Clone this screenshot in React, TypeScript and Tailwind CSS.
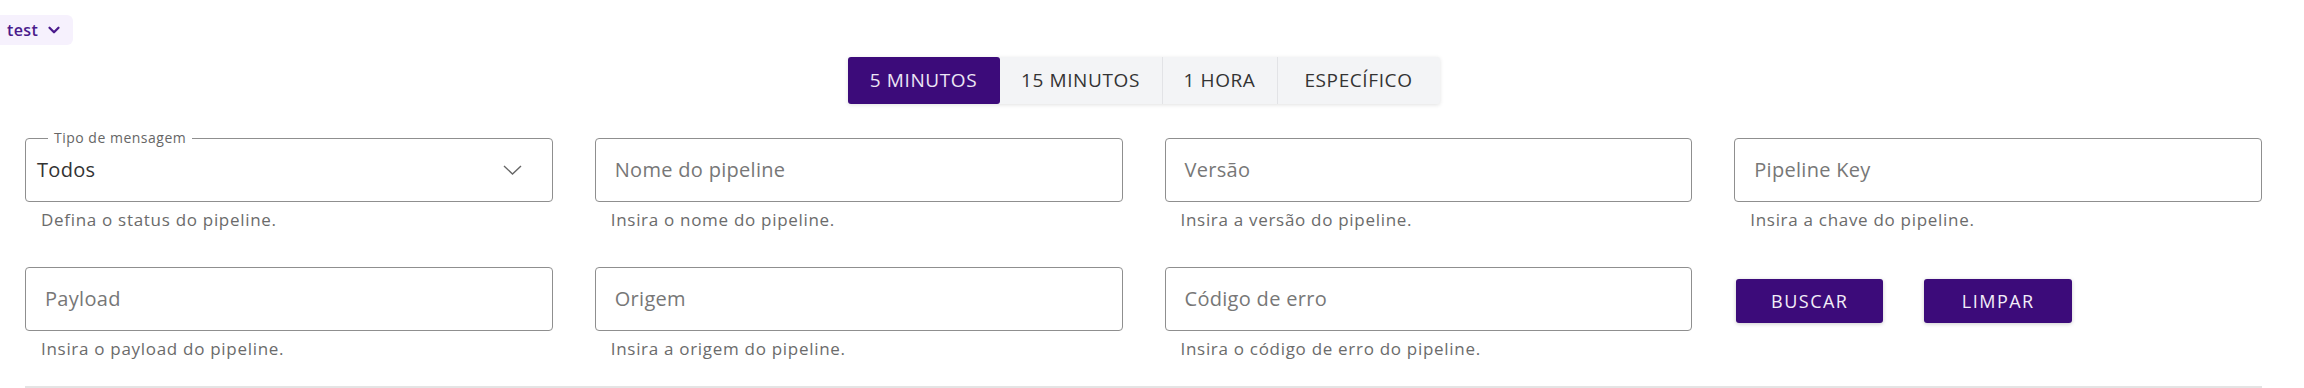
import { ChevronDown } from 'lucide-react';

const periods = [
  { label: '5 MINUTOS', w: 'w-[152px]', active: true },
  { label: '15 MINUTOS', w: 'w-[162px]', active: false },
  { label: '1 HORA', w: 'w-[115px]', active: false },
  { label: 'ESPECÍFICO', w: 'w-[163px]', active: false },
];

const TextField = ({ placeholder, help }: { placeholder: string; help: string }) => (
  <div>
    <div className="h-[64px] border border-[#8f8f8f] rounded-[4px] flex items-center px-[19px]">
      <span className="text-[20px] tracking-[0.3px] text-[#777]">{placeholder}</span>
    </div>
    <p className="mt-[8px] pl-[16px] h-[20px] leading-[20px] text-[17px] tracking-[0.7px] text-[#6b6b6b]">{help}</p>
  </div>
);

const App = () => {
  return (
    <div className="w-[2304px] h-[388px] bg-white font-['Open_Sans',sans-serif] overflow-hidden">
      <div className="pt-[15px]">
        <button className="h-[30px] w-[73px] bg-[#f6f1fd] rounded-r-md flex items-center gap-[7px] pl-[7px] text-[16px] tracking-[0.4px] font-semibold text-[#4a1a8c]">
          test
          <ChevronDown size={18} strokeWidth={3} />
        </button>
      </div>

      <div className="pl-[25px] pr-[42px]">
        <div className="mt-[12px] flex justify-center">
          <div className="flex h-[47px] bg-[#f3f4f6] rounded-[3px] shadow-[0_1px_4px_rgba(0,0,0,0.12)]">
            {periods.map((p, i) => (
              <div
                key={p.label}
                className={`${p.w} flex items-center justify-center text-[19px] tracking-[0.6px] ${
                  p.active
                    ? 'bg-[#3c0b7a] text-[#ece6f5] rounded-[3px]'
                    : 'text-[#333]'
                } ${i > 1 ? 'border-l border-[#e2e3e6]' : ''}`}
              >
                {p.label}
              </div>
            ))}
          </div>
        </div>

        <div className="mt-[34px] grid grid-cols-4 gap-x-[42px] gap-y-[37px]">
          <div>
            <div className="relative h-[64px] border border-[#8f8f8f] rounded-[4px] flex items-center justify-between pl-[11px] pr-[30px]">
              <span className="absolute -top-[10px] left-[22px] bg-white px-[6px] text-[14px] tracking-[0.5px] leading-[18px] text-[#666]">
                Tipo de mensagem
              </span>
              <span className="text-[20px] tracking-[0.3px] text-[#333]">Todos</span>
              <svg width="19" height="10" viewBox="0 0 19 10" fill="none">
                <polyline points="1,1 9.5,9 18,1" stroke="#666" strokeWidth="1.4" />
              </svg>
            </div>
            <p className="mt-[8px] pl-[16px] h-[20px] leading-[20px] text-[17px] tracking-[0.7px] text-[#6b6b6b]">
              Defina o status do pipeline.
            </p>
          </div>
          <TextField placeholder="Nome do pipeline" help="Insira o nome do pipeline." />
          <TextField placeholder="Versão" help="Insira a versão do pipeline." />
          <TextField placeholder="Pipeline Key" help="Insira a chave do pipeline." />
          <TextField placeholder="Payload" help="Insira o payload do pipeline." />
          <TextField placeholder="Origem" help="Insira a origem do pipeline." />
          <TextField placeholder="Código de erro" help="Insira o código de erro do pipeline." />
          <div className="flex gap-[41px] pt-[12px] pl-[2px]">
            <button className="w-[147px] h-[44px] bg-[#3c0b7a] rounded-[3px] text-[#f3eef9] text-[18px] tracking-[1.5px] font-medium shadow-[0_1px_4px_rgba(0,0,0,0.2)]">
              BUSCAR
            </button>
            <button className="w-[148px] h-[44px] bg-[#3c0b7a] rounded-[3px] text-[#f3eef9] text-[18px] tracking-[1.5px] font-medium shadow-[0_1px_4px_rgba(0,0,0,0.2)]">
              LIMPAR
            </button>
          </div>
        </div>

        <div className="mt-[27px] h-[2px] bg-[#e4e4e4]" />
      </div>
    </div>
  );
};

export default App;
